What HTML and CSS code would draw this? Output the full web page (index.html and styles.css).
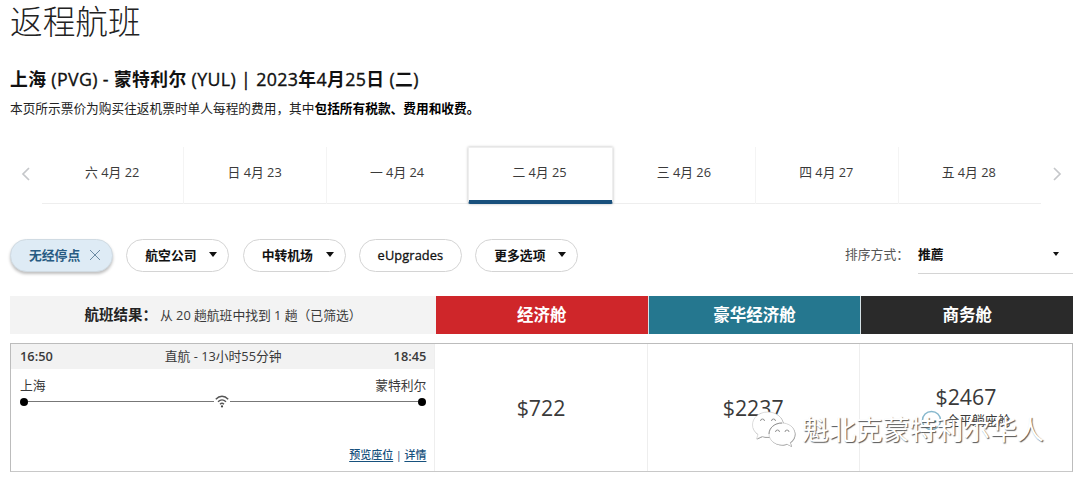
FILE: index.html
```
<!DOCTYPE html>
<html lang="zh-CN">
<head>
<meta charset="utf-8">
<title>返程航班</title>
<link rel="stylesheet" href="styles.css">
</head>
<body>
<main class="page">
  <h1 class="title">返程航班</h1>
  <h2 class="route"><b>上海</b> (PVG) - <b>蒙特利尔</b> (YUL) | 2023<b>年</b>4<b>月</b>25<b>日</b> (<b>二</b>)</h2>
  <p class="note">本页所示票价为购买往返机票时单人每程的费用，其中<b>包括所有税款、费用和收费。</b></p>

  <nav class="dates">
    <svg class="arrow" viewBox="0 0 32 58"><path d="M19 21l-6 6 6 6"/></svg>
    <div class="days">
      <div class="day">六 4月 22</div>
      <div class="day">日 4月 23</div>
      <div class="day">一 4月 24</div>
      <div class="day active">二 4月 25</div>
      <div class="day">三 4月 26</div>
      <div class="day">四 4月 27</div>
      <div class="day">五 4月 28</div>
    </div>
    <svg class="arrow" viewBox="0 0 32 58"><path d="M13 21l6 6-6 6"/></svg>
  </nav>

  <div class="filters">
    <div class="pill on"><span>无经停点</span><svg class="close" viewBox="0 0 12 12"><path d="M1 1l10 10M11 1L1 11"/></svg></div>
    <div class="pill"><span>航空公司</span><i class="caret"></i></div>
    <div class="pill"><span>中转机场</span><i class="caret"></i></div>
    <div class="pill latin"><span>eUpgrades</span></div>
    <div class="pill"><span>更多选项</span><i class="caret"></i></div>
    <div class="sort">
      <span class="sort-label">排序方式：</span>
      <div class="select"><b>推薦</b><i class="caret small"></i></div>
    </div>
  </div>

  <div class="head">
    <div class="summary"><b>航班结果：</b><span>从 20 趟航班中找到 1 趟（已筛选）</span></div>
    <div class="cabin economy">经济舱</div>
    <div class="cabin premium">豪华经济舱</div>
    <div class="cabin business">商务舱</div>
  </div>

  <section class="card">
    <div class="flight">
      <div class="times"><b>16:50</b><span>直航 - 13小时55分钟</span><b>18:45</b></div>
      <div class="cities"><span>上海</span><span>蒙特利尔</span></div>
      <div class="track">
        <i class="dot"></i><i class="line"></i>
        <svg class="wifi" viewBox="0 0 14 13"><path d="M.8 4.3C4.5.3 9.5.3 13.2 4.3M3 6.8c2.6-2.5 5.4-2.5 8 0M5 9.2c1.3-1.2 2.7-1.2 4 0"/><circle cx="7" cy="11.4" r="1.1"/></svg>
        <i class="line"></i><i class="dot"></i>
      </div>
      <div class="links"><a>预览座位</a><span>|</span><a>详情</a></div>
    </div>
    <div class="fare">$722</div>
    <div class="fare">$2237</div>
    <div class="fare with-seat">
      <span>$2467</span>
      <div class="seat"><svg viewBox="0 0 22 22"><circle cx="11" cy="11" r="9.5"/><path class="bed" d="M12 11h4v2h-4z"/></svg><span>全平躺座舱</span></div>
    </div>
  </section>
</main>

<div class="watermark">
  <svg viewBox="0 0 46 38">
    <g class="shade" transform="translate(.5 .6)"><path d="M17 2C8 2 1.500 7.500 1.500 15c0 4 2 7 5.500 9.500L5.500 29l5.500-2.500c2 .6 4 .8 6 .8 8.500 0 15.500-5.300 15.500-12.300S25.500 2 17 2z"/><path d="M31 13c-7.500 0-13 5-13 11s5.500 11 13 11c2 0 3.500-.3 5-.8l4.500 2.300-1.200-4c3-2 4.700-5 4.700-8.500 0-6-5.500-11-13-11z"/></g>
    <path class="bubble" d="M17 2C8 2 1.500 7.500 1.500 15c0 4 2 7 5.500 9.500L5.500 29l5.500-2.500c2 .6 4 .8 6 .8 8.500 0 15.500-5.300 15.500-12.300S25.500 2 17 2z"/>
    <path class="bubble" d="M31 13c-7.500 0-13 5-13 11s5.500 11 13 11c2 0 3.500-.3 5-.8l4.500 2.300-1.200-4c3-2 4.700-5 4.700-8.500 0-6-5.500-11-13-11z"/>
    <path class="rim" d="M18 24c0-6 5.500-11 13-11M9.500 11a2 2 0 0 1 4 0M20.500 11a2 2 0 0 1 4 0M24.500 22a2 2 0 0 1 4 0M34 22a2 2 0 0 1 4 0"/>
  </svg>
  <span>魁北克蒙特利尔华人</span>
</div>
</body>
</html>
```
FILE: styles.css
```
* { box-sizing: border-box; }
body {
  margin: 0;
  background: #fff;
  color: #3a3a3a;
  font: 12.8px/18px "Open Sans", "Noto Sans CJK SC", sans-serif;
  white-space: nowrap;
  overflow: hidden;
}
.page { width: 1063px; margin-left: 10px; height: 479px; }
.title {
  margin: 0;
  height: 66px;
  color: #222;
  font-size: 32.7px;
  line-height: 43px;
  font-weight: 300;
}
.route {
  margin: 0;
  height: 28px;
  color: #111;
  font-size: 17.8px;
  line-height: 26px;
  font-weight: 400;
  letter-spacing: .37px;
  -webkit-text-stroke: .35px #111;
}
.route b { font-weight: 700; -webkit-text-stroke: 0; }
.note { margin: 5px 0 0; height: 48px; font-size: 12.7px; color: #222; }
.note b { color: #000; }

.dates { display: flex; height: 57px; }
.arrow { width: 32px; height: 58px; fill: none; stroke: #c5c7ca; stroke-width: 1.7; }
.days { display: flex; width: 999px; border-bottom: 1px solid #eee; }
.day {
  flex: 1;
  height: 57px;
  padding: 0 1px 8px 0;
  display: flex;
  align-items: center;
  justify-content: center;
  border-right: 1px solid #f4f4f4;
}
.day:last-child { border-right: 0; padding-right: 2px; }
.active {
  background: #fff;
  border: 1px solid #eee;
  border-bottom: 4px solid #18507c;
  border-radius: 0 0 2px 2px;
  padding: 0 2px 4px 0;
  margin: 0 1px 0 -1px;
  box-shadow: 0 0 3px rgba(0, 0, 0, .28);
}

.filters { display: flex; gap: 13.5px; margin-top: 35px; height: 57px; }
.pill {
  width: 103px;
  height: 33px;
  padding: 0 11px 2px 18px;
  display: flex;
  align-items: center;
  justify-content: space-between;
  border: 1px solid #d4d4d4;
  border-radius: 17px;
  color: #111;
  font-weight: 700;
}
.pill + .pill { margin-left: -.2px; }
.latin {
  justify-content: center;
  padding: 0 0 2px;
  font-weight: 400;
  letter-spacing: .1px;
  -webkit-text-stroke: .3px #111;
}
.on {
  color: #285b83;
  background: #deebf5;
  border-color: #d0dbe3;
  box-shadow: 0 2px 3px rgba(0, 0, 0, .25);
}
.close { width: 12px; height: 12px; fill: none; stroke: #6c8ba3; stroke-width: 1; }
.caret {
  border: 4.5px solid transparent;
  border-top: 5px solid #111;
  border-bottom: 0;
}
.small { border-width: 4px 3.5px 0; }
.sort { display: flex; margin-left: auto; height: 35px; align-items: center; }
.sort-label { width: 73px; padding-bottom: 5px; color: #555; }
.select {
  width: 155px;
  height: 35px;
  padding: 0 14px 5px 0;
  display: flex;
  align-items: center;
  justify-content: space-between;
  border-bottom: 1px solid #d4d4d4;
  color: #111;
}

.head { display: flex; height: 38px; }
.summary {
  width: 426px;
  display: flex;
  align-items: center;
  justify-content: center;
  background: #f3f3f3;
}
.summary b { font-size: 14.5px; color: #222; margin-right: 3px; }
.cabin {
  flex: 1;
  display: flex;
  align-items: center;
  justify-content: center;
  color: #fff;
  font-size: 16.5px;
  font-weight: 700;
}
.economy { background: #cf262a; }
.premium { background: #25778f; border: solid #d5e2e6; border-width: 0 1px; }
.business { background: #2a2a2a; }

.card { display: flex; width: 1063px; height: 129px; margin-top: 9px; border: 1px solid #bcbcbc; border-bottom-color: #c8c8c8; }
.flight { width: 425px; border-right: 1px solid #eee; }
.times {
  display: flex;
  justify-content: space-between;
  height: 25px;
  line-height: 24px;
  padding: 0 8px 0 9px;
  background: #f2f2f2;
}
.times b { font-weight: 600; }
.cities { display: flex; justify-content: space-between; padding: 0 8px 0 9px; margin-top: 7px; }
.track { display: flex; align-items: center; height: 15px; padding: 0 8px 0 9px; }
.dot { width: 8px; height: 8px; border-radius: 50%; background: #000; }
.line { flex: 1; height: 1px; background: #777; }
.line:nth-of-type(2) { flex-grow: .985; }
.wifi { width: 14px; height: 13px; margin: 0 1px; fill: none; stroke: #555; stroke-width: 1.4; }
.wifi circle { fill: #444; stroke: none; }
.links {
  display: flex;
  justify-content: flex-end;
  gap: 2.6px;
  padding: 0 8px 0 9px;
  margin-top: 37px;
  font-size: 11px;
  color: #17517d;
}
.links a { text-decoration: underline; text-underline-offset: 2px; font-weight: 500; }
.fare {
  width: 212.500px;
  display: flex;
  align-items: center;
  justify-content: center;
  border-right: 1px solid #eee;
  font-size: 21.300px;
}
.fare:last-child { border-right: 0; }
.with-seat { flex-direction: column; }
.with-seat > span { line-height: 24px; margin-top: 1px; }
.seat { display: flex; align-items: center; gap: 4px; font-size: 12.800px; height: 22px; }
.seat svg { width: 21px; height: 21px; fill: none; stroke: #87b8cd; stroke-width: 1.500; }
.seat .bed { fill: #25778f; stroke: none; }

.watermark {
  position: absolute;
  left: 751px;
  top: 410px;
  display: flex;
  gap: 5px;
}
.watermark svg { width: 46px; height: 38px; fill: none; }
.watermark .shade { fill: #777; }
.watermark .bubble { fill: #fff; stroke: #bbb; stroke-width: .5; }
.watermark .rim { stroke: #888; stroke-width: .9; }
.watermark span {
  font-size: 26.900px;
  line-height: 40px;
  color: #fff;
  text-shadow: 1px 1px 1px #555;
}
```
